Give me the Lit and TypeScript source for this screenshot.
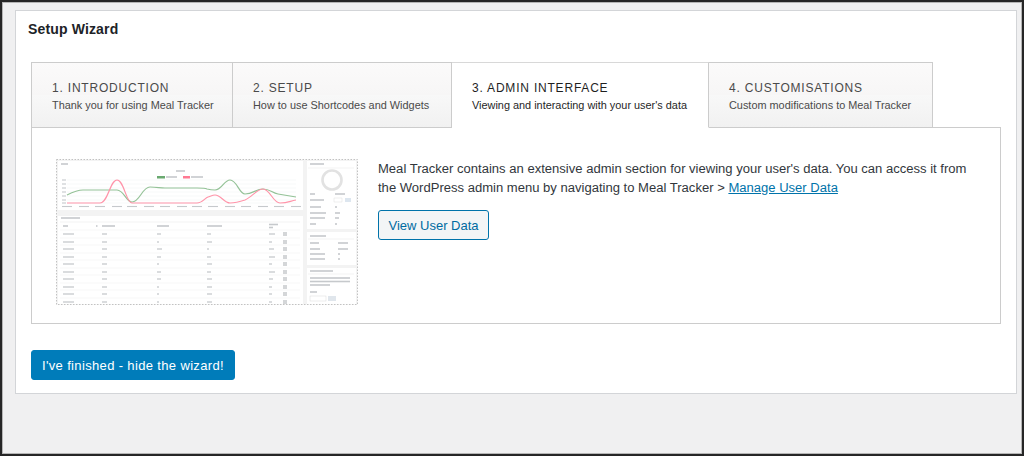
import { LitElement, html, css, svg } from "lit";
import { customElement } from "lit/decorators.js";

const tabs = [
  { t: "1. Introduction", s: "Thank you for using Meal Tracker", w: 202 },
  { t: "2. Setup", s: "How to use Shortcodes and Widgets", w: 219 },
  { t: "3. Admin Interface", s: "Viewing and interacting with your user's data", w: 257, active: true },
  { t: "4. Customisations", s: "Custom modifications to Meal Tracker", w: 224 },
];

const green = "M67 195 C75 191 78 190 83 190 C95 190 105 190 117 190 C124 190 126 202 132 202 C140 202 142 187 150 187 C157 187 160 188 165 188 L183 188 L197 188 C203 188 205 188 207 189 C211 190 213 190 215 190 C222 190 224 180 230 180 C237 180 239 194 245 194 C253 194 256 189 263 189 C270 189 272 193 278 194 L296 197";
const pink = "M67 203 L100 203 C108 203 110 180 117 180 C124 180 126 203 132 203 L197 203 C202 203 205 198 208 197 C211 196 213 195 215 195 C221 195 224 203 230 203 C236 203 239 202 245 200 C252 197 257 189 263 189 C270 189 273 203 280 203 C288 203 290 201 296 200";

const rowYs = [234, 242, 249, 257, 264, 272, 279, 287, 294, 302];
const cols: [number, number[]][] = [
  [63, [11, 11, 11, 11, 11, 11, 11, 11, 11, 11]],
  [102, [5, 5, 5, 5, 5, 5, 5, 5, 5, 5]],
  [157, [4, 2, 5, 4, 2, 4, 4, 2, 2, 2]],
  [207, [4, 5, 2, 4, 5, 4, 5, 5, 5, 5]],
  [269, [6, 3, 5, 6, 3, 6, 4, 3, 3, 3]],
];
const bar = (x: number, y: number, w: number, h = 1.6, c = "#c6c9cc") =>
  svg`<rect x=${x} y=${y - h / 2} width=${w} height=${h} fill=${c}></rect>`;

const shot = svg`
  <svg class="shot" viewBox="56 159 302 146" width="302" height="146" role="img" aria-label="Admin screen preview">
    <defs><filter id="b" x="-5%" y="-5%" width="110%" height="110%"><feGaussianBlur stdDeviation="0.6"></feGaussianBlur></filter></defs>
    <rect x="56.5" y="159.5" width="301" height="145" fill="#f3f3f3" stroke="#c2c2c2" stroke-dasharray="1.5 1.5"></rect>
    <g filter="url(#b)">
      <rect x="58" y="161" width="245" height="49" fill="#fff"></rect>
      <rect x="58" y="216" width="245" height="88" fill="#fff"></rect>
      <rect x="307" y="161" width="49" height="68" fill="#fff"></rect>
      <rect x="307" y="232" width="49" height="33" fill="#fff"></rect>
      <rect x="307" y="268" width="49" height="36" fill="#fff"></rect>
      ${bar(61, 164, 7)}
      ${bar(176, 171, 9)}
      <rect x="157" y="176" width="8" height="2.5" fill="#6aa96f"></rect>${bar(166, 177, 11)}
      <rect x="183" y="176" width="7" height="2.5" fill="#ff7a93"></rect>${bar(191, 177, 12)}
      ${[180, 184, 188, 192, 196, 200, 203].map((y) => bar(67, y, 229, 0.4, "#eceef0"))}
      ${[180, 184, 188, 192, 196, 200, 203].map((y) => bar(62, y, 4, 1.1))}
      ${[67, 84, 100, 117, 132, 149, 165, 182, 197, 213, 230, 246, 263, 279, 296].map((x) => bar(x - 5, 206.5, 10, 1.1))}
      <path d=${green} fill="none" stroke="#94c297" stroke-width="1.2"></path>
      <path d=${pink} fill="none" stroke="#ff94a9" stroke-width="1.2"></path>
      ${bar(61, 218, 19)}
      ${bar(60, 222, 240, 0.5, "#e8e8e8")}
      ${bar(63, 226, 5)}${bar(96, 226, 1.5)}${bar(102, 226, 13)}${bar(157, 226, 12)}${bar(207, 226, 15)}${bar(269, 224.5, 9)}${bar(269, 227.5, 4)}
      ${rowYs.map((y) => bar(60, y - 4, 240, 0.5, "#eeeeee"))}
      ${cols.map(([x, ws]) => rowYs.map((y, i) => bar(x, y, ws[i], 1.3)))}
      ${rowYs.map((y) => svg`<rect x="283" y=${y - 2} width="4" height="4" fill="#d4d6d8"></rect>`)}
      ${bar(310, 164, 14)}
      ${bar(308, 168, 46, 0.5, "#e8e8e8")}
      <circle cx="332" cy="180" r="9.5" fill="none" stroke="#e2e2e2" stroke-width="2.6"></circle>
      ${[194, 200, 207, 213, 218, 224].map((y, i) => bar(310, y, [5, 14, 11, 16, 15, 6][i]))}
      ${[194, 207, 213, 218, 224].map((y, i) => bar(335, y, [10, 2, 5, 4, 2][i]))}
      <rect x="334" y="198" width="8" height="4" fill="#fff" stroke="#d8d8d8" stroke-width="0.4"></rect>
      <rect x="345" y="198" width="6" height="4" fill="#dde6ef"></rect>
      ${bar(310, 236, 16)}
      ${bar(308, 239, 46, 0.5, "#e8e8e8")}
      ${[243, 249, 254, 259].map((y, i) => bar(310, y, [9, 10, 15, 15][i]))}
      ${[243, 249, 254, 259].map((y, i) => bar(338, y, [10, 10, 2, 2][i]))}
      ${bar(310, 271, 23)}
      ${bar(308, 274, 46, 0.5, "#e8e8e8")}
      ${[278, 281.5, 285].map((y, i) => bar(310, y, [40, 40, 20][i]))}
      ${bar(310, 292, 7)}
      <rect x="310" y="296" width="16" height="5" fill="#fff" stroke="#d0d0d0" stroke-width="0.4"></rect>
      <rect x="328" y="296" width="8" height="5" fill="#e0e6ec"></rect>
    </g>
  </svg>`;

@customElement("app-root")
export class AppRoot extends LitElement {
  static styles = css`
    :host {
      display: block;
      width: 1024px;
      height: 456px;
      font-family: "Liberation Sans", Arial, sans-serif;
    }
    .frame {
      box-sizing: border-box;
      width: 1024px;
      height: 456px;
      padding: 8px 5px 0 13px;
      background: #f0f0f1;
      border: 2px solid #262626;
      box-shadow: inset 0 0 0 1px #b5b5b5;
    }
    .panel {
      box-sizing: border-box;
      height: 384px;
      padding: 0 15px 0 12px;
      background: #fff;
      border: 1px solid #d3d5d8;
    }
    h1 {
      margin: 0;
      padding: 9px 0 0;
      height: 41px;
      box-sizing: border-box;
      font-size: 14px;
      line-height: 18px;
      font-weight: 700;
      letter-spacing: 0.15px;
      color: #1d2327;
    }
    .tabs {
      display: flex;
      margin: 10px 0 -1px 3px;
    }
    .tab {
      box-sizing: border-box;
      height: 66px;
      padding: 17px 0 0 20px;
      border: 1px solid #ccc;
      border-left-width: 0;
      background: linear-gradient(#fbfafa, #f7f6f6 50%, #f8f8f8 50%, #f1f1f1);
      color: #4a4a4a;
      white-space: nowrap;
    }
    .tab:first-child {
      border-left-width: 1px;
    }
    .tab.active {
      position: relative;
      background: #fff;
      border-bottom-color: #fff;
      border-top-color: #d8d8d8;
      border-right-color: #ccc;
      color: #1f1f1f;
    }
    .t {
      font-size: 12px;
      line-height: 16px;
      letter-spacing: 0.8px;
      text-transform: uppercase;
    }
    .s {
      margin-top: 1px;
      font-size: 10.9px;
      line-height: 16px;
    }
    .content {
      box-sizing: border-box;
      display: flex;
      gap: 20px;
      width: 970px;
      height: 197px;
      margin-left: 3px;
      padding: 31px 24px 0;
      border: 1px solid #ccc;
    }
    .shot {
      display: block;
      flex: none;
    }
    .body {
      padding-top: 1px;
      color: #32373c;
    }
    p {
      margin: 0;
      font-size: 13.05px;
      line-height: 18.5px;
    }
    a {
      color: #0073aa;
      text-decoration: underline;
    }
    .btn {
      display: inline-block;
      box-sizing: border-box;
      font-family: inherit;
      border-radius: 3px;
      cursor: pointer;
    }
    .secondary {
      margin: 13px 0 0;
      width: 111px;
      height: 30px;
      padding: 0;
      font-size: 13px;
      background: #f3f5f6;
      border: 1px solid #0073aa;
      color: #006ba1;
    }
    .primary {
      display: block;
      margin: 26px 0 0 3px;
      width: 204px;
      height: 30px;
      padding: 0;
      font-size: 13px;
      letter-spacing: 0.35px;
      background: #007cba;
      border: 1px solid #007cba;
      color: #fff;
    }
  `;

  render() {
    return html`
      <div class="frame">
        <section class="panel">
          <h1>Setup Wizard</h1>
          <div class="tabs">
            ${tabs.map(
              (t) => html`<div class="tab ${t.active ? "active" : ""}" style="width:${t.w}px">
                <div class="t">${t.t}</div>
                <div class="s">${t.s}</div>
              </div>`
            )}
          </div>
          <div class="content">
            ${shot}
            <div class="body">
              <p>
                Meal Tracker contains an extensive admin section for viewing your user's data. You can access it from
                the WordPress admin menu by navigating to Meal Tracker &gt; <a href="#">Manage User Data</a>
              </p>
              <button class="btn secondary">View User Data</button>
            </div>
          </div>
          <button class="btn primary">I've finished - hide the wizard!</button>
        </section>
      </div>
    `;
  }
}
